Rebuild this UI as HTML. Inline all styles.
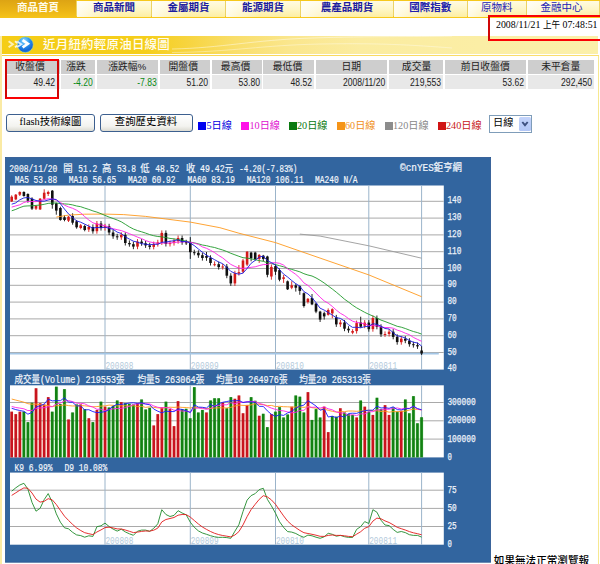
<!DOCTYPE html>
<html lang="zh-Hant">
<head>
<meta charset="utf-8">
<title>近月紐約輕原油日線圖</title>
<style>
html,body{margin:0;padding:0;background:#fff;}
body{width:600px;height:564px;position:relative;overflow:hidden;font-family:"Liberation Sans","Noto Sans CJK TC",sans-serif;}
.abs{position:absolute;}
#nav{position:absolute;left:0;top:0;width:600px;height:18px;background:linear-gradient(#f6c81c 0,#f6c81c 1px,#ecd366 1px,#ecd366 16.5px,#f8c91c 16.5px);}
.tab{position:absolute;top:1px;height:15.5px;background:linear-gradient(90deg,rgba(255,255,255,0.75),rgba(255,255,255,0) 45%),linear-gradient(#fffbe2,#fef6c4 55%,#fdeea2);color:#1c1ca0;font-weight:bold;font-size:10.5px;line-height:13.5px;text-align:center;white-space:nowrap;}
.tab.on{background:linear-gradient(#dda414,#e9b216 50%,#f6c41a);color:#fffbe8;top:0;height:18px;line-height:15.5px;}
#side-l{position:absolute;left:0;top:36px;width:1.8px;height:528px;background:#faeaa4;}
#side-r{position:absolute;left:597.5px;top:55px;width:1.3px;height:509px;background:#f6e890;}
#title{position:absolute;left:1.8px;top:36px;width:596.4px;height:17.8px;background:linear-gradient(90deg,#f5cd16 0,#f5ce1a 24%,#f7d43e 31%,#f9de6a 39%,#fae68c 48%,#fbecA0 60%,#fbf0aa 100%);}
#tline{position:absolute;left:1.8px;top:54.8px;width:596.8px;height:1.2px;background:linear-gradient(90deg,#f7d140,#f9d95c 50%,#fadf70);}
#title span{position:absolute;left:41.2px;top:0.8px;line-height:17.8px;color:#fffdf0;font-size:12.5px;font-weight:500;white-space:nowrap;letter-spacing:0.2px;}
.th,.td{position:absolute;white-space:nowrap;font-size:9.8px;color:#222;box-sizing:border-box;}
.th{top:60px;height:13.8px;line-height:13.8px;background:#cecece;text-align:center;}
.td{top:75.2px;height:14px;line-height:15.4px;overflow:hidden;background:#e8e8e8;text-align:right;}
.td span{display:inline-block;margin-right:1.5px;font-size:10px;transform:scaleX(0.86);transform-origin:100% 50%;}
.g{color:#0a8a16;}
.redbox{position:absolute;z-index:5;border:2.5px solid #fa0204;border-left:2.8px solid #d00606;border-right:2.8px solid #d00606;box-sizing:border-box;}
.btn{position:absolute;top:114px;height:18px;box-sizing:border-box;border:1px solid #3c5f8f;border-radius:3px;background:linear-gradient(#ffffff,#f3f3ef 70%,#dcdbd2);font-family:"Liberation Serif","Noto Sans CJK TC",serif;font-size:10.4px;line-height:14.4px;text-align:center;color:#000;white-space:nowrap;font-weight:400;}
.lg{position:absolute;top:120px;font-size:10.2px;line-height:12px;white-space:nowrap;font-family:"Liberation Serif","Noto Sans CJK TC",serif;}
.lg i{position:absolute;left:0;top:2.2px;width:8px;height:8px;}
.lg span{position:absolute;left:8.5px;top:0;}
#sel{position:absolute;left:489px;top:115px;width:43px;height:18px;box-sizing:border-box;border:1px solid #7f9db9;background:#fff;}
#sel span{position:absolute;left:3px;top:-1px;font-size:10.2px;line-height:15px;color:#000;}
#sel b{position:absolute;left:28.5px;top:1px;width:12px;height:14px;border-radius:1.5px;background:linear-gradient(#c4d4fb,#b2c6f6);box-sizing:border-box;}
#date{position:absolute;left:496px;top:18.2px;font-family:"Liberation Serif","Noto Sans CJK TC",serif;font-size:11px;line-height:13px;color:#000;white-space:nowrap;transform-origin:0 0;transform:scaleX(0.894);}
#foot{position:absolute;left:493.8px;top:555.2px;font-family:"Liberation Serif","Noto Sans CJK TC",serif;font-size:10.6px;line-height:12px;color:#000;white-space:nowrap;font-weight:500;}
svg text{font-family:"Liberation Mono","Noto Sans CJK TC",monospace;}
.ax{font-size:10.6px;fill:#eef3fb;stroke:#eef3fb;stroke-width:0.25px;}
.tt{font-size:10.6px;fill:#f4f7fc;white-space:pre;stroke:#f4f7fc;stroke-width:0.2px;}
.ml{font-size:10.6px;fill:#b4cadb;}
</style>
</head>
<body>
<div id="nav">
  <div class="tab on" style="left:0;width:76px;">商品首頁</div>
  <div class="tab" style="left:77px;width:74px;">商品新聞</div>
  <div class="tab" style="left:152px;width:73px;">金屬期貨</div>
  <div class="tab" style="left:226px;width:74px;">能源期貨</div>
  <div class="tab" style="left:301px;width:92px;">農產品期貨</div>
  <div class="tab" style="left:394px;width:72.5px;color:#2020ac;">國際指數</div>
  <div class="tab" style="left:467.5px;width:58.5px;font-weight:400;color:#2222b4;">原物料</div>
  <div class="tab" style="left:526.5px;width:72px;box-sizing:border-box;padding-right:2px;font-weight:400;color:#2222b4;">金融中心</div>
</div>
<div id="date">2008/11/21 <span style="font-size:9.6px">上午</span> 07:48:51</div>
<div class="redbox" style="left:488px;top:15px;width:116px;height:26px;"></div>

<div id="side-l"></div><div id="side-r"></div><div id="tline"></div>
<div id="title">
  <svg class="abs" style="left:0;top:0" width="44" height="19" viewBox="0 0 44 19">
    <defs><radialGradient id="bg" cx="0.42" cy="0.25" r="0.85"><stop offset="0" stop-color="#8fdcff"/><stop offset="0.4" stop-color="#2a96ee"/><stop offset="0.75" stop-color="#1464d4"/><stop offset="1" stop-color="#2a9cec"/></radialGradient></defs>
    <path d="M6.6 5.2 L10.8 8.2 L6.6 11.2" stroke="#fdf0b4" stroke-width="2" fill="none"/>
    <path d="M13 5.2 L17.2 8.2 L13 11.2" stroke="#fdf6d8" stroke-width="2" fill="none"/>
    <circle cx="23.3" cy="8.7" r="8" fill="url(#bg)" stroke="#cfe070" stroke-width="0.7"/>
    <path d="M15.2 5.4 L19.4 8.2 L15.2 11" stroke="#eaf4ff" stroke-width="1.8" fill="none" opacity="0.9"/>
    <path d="M20.6 4.2 L25.8 7.8 L20.6 11.4" stroke="#fff" stroke-width="2.7" fill="none"/>
  </svg>
  <svg class="abs" style="left:150px;top:0" width="300" height="18" viewBox="0 0 300 18"><path d="M20 13 C70 12 100 4 160 2 S260 1 300 0" stroke="#fff" stroke-opacity="0.55" stroke-width="0.8" fill="none"/><path d="M20 16.5 C80 16 110 9 170 8 S260 9 300 12" stroke="#fff" stroke-opacity="0.45" stroke-width="0.8" fill="none"/></svg>
  <span>近月紐約輕原油日線圖</span>
</div>

<!-- table -->
<div class="th" style="left:5px;width:54.5px;padding-right:4.5px;">收盤價</div>
<div class="th" style="left:61px;width:34px;padding-right:4px;">漲跌</div>
<div class="th" style="left:96.5px;width:61.5px;">漲跌幅%</div>
<div class="th" style="left:159.5px;width:50.5px;padding-right:3px;">開盤價</div>
<div class="th" style="left:211.5px;width:50.5px;padding-right:2.4px;">最高價</div>
<div class="th" style="left:263px;width:51px;padding-right:2px;">最低價</div>
<div class="th" style="left:315.5px;width:71.5px;">日期</div>
<div class="th" style="left:388.5px;width:54.5px;padding-left:1.6px;">成交量</div>
<div class="th" style="left:444.5px;width:81.5px;">前日收盤價</div>
<div class="th" style="left:527.5px;width:66.5px;">未平倉量</div>

<div class="td" style="left:5px;width:54.5px;"><span style="margin-right:4.7px">49.42</span></div>
<div class="td g" style="left:61px;width:34px;"><span style="margin-right:2.5px">-4.20</span></div>
<div class="td g" style="left:96.5px;width:61.5px;"><span>-7.83</span></div>
<div class="td" style="left:159.5px;width:50.5px;"><span>51.20</span></div>
<div class="td" style="left:211.5px;width:50.5px;"><span>53.80</span></div>
<div class="td" style="left:263px;width:51px;"><span>48.52</span></div>
<div class="td" style="left:315.5px;width:71.5px;"><span>2008/11/20</span></div>
<div class="td" style="left:388.5px;width:54.5px;"><span>219,553</span></div>
<div class="td" style="left:444.5px;width:81.5px;"><span>53.62</span></div>
<div class="td" style="left:527.5px;width:66.5px;"><span>292,450</span></div>
<div class="redbox" style="left:5px;top:59px;width:54.3px;height:39.8px;"></div>

<!-- buttons / legend -->
<div class="btn" style="left:6px;width:89px;">flash技術線圖</div>
<div class="btn" style="left:99.5px;width:93px;">查詢歷史資料</div>
<div class="lg" style="left:198px;color:#0000e0;"><i style="background:#0000f0"></i><span>5日線</span></div>
<div class="lg" style="left:241px;color:#e010d0;"><i style="background:#ff10e8"></i><span>10日線</span></div>
<div class="lg" style="left:288.5px;color:#0a7a10;"><i style="background:#0a7a10"></i><span>20日線</span></div>
<div class="lg" style="left:336.5px;color:#f09020;"><i style="background:#f59418"></i><span>60日線</span></div>
<div class="lg" style="left:384.5px;color:#888;"><i style="background:#8c8c8c"></i><span>120日線</span></div>
<div class="lg" style="left:437.5px;color:#c81818;"><i style="background:#d01414"></i><span>240日線</span></div>
<div id="sel"><span>日線</span><b><svg width="12" height="14" viewBox="0 0 12 14" style="position:absolute;left:0;top:0"><path d="M3.3 5 L6 8.2 L8.7 5" stroke="#3d5080" stroke-width="1.9" fill="none"/></svg></b></div>

<svg class="abs" style="left:0;top:0" width="600" height="564" viewBox="0 0 600 564">
<rect x="5.4" y="157.4" width="485.2" height="404.8" fill="#32659f" stroke="#285690" stroke-width="0.8"/>
<rect x="10" y="185.5" width="433.8" height="184.10000000000002" fill="#fff"/>
<rect x="10" y="385.3" width="433.8" height="72.09999999999997" fill="#fff"/>
<rect x="10" y="472.6" width="433.8" height="72.10000000000002" fill="#fff"/>
<line x1="10" x2="443.8" y1="352.5" y2="352.5" stroke="#a9a9a9" stroke-width="1"/>
<line x1="10" x2="443.8" y1="335.7" y2="335.7" stroke="#a9a9a9" stroke-width="1"/>
<line x1="10" x2="443.8" y1="318.9" y2="318.9" stroke="#a9a9a9" stroke-width="1"/>
<line x1="10" x2="443.8" y1="302.1" y2="302.1" stroke="#a9a9a9" stroke-width="1"/>
<line x1="10" x2="443.8" y1="285.3" y2="285.3" stroke="#a9a9a9" stroke-width="1"/>
<line x1="10" x2="443.8" y1="268.5" y2="268.5" stroke="#a9a9a9" stroke-width="1"/>
<line x1="10" x2="443.8" y1="251.7" y2="251.7" stroke="#a9a9a9" stroke-width="1"/>
<line x1="10" x2="443.8" y1="234.9" y2="234.9" stroke="#a9a9a9" stroke-width="1"/>
<line x1="10" x2="443.8" y1="218.1" y2="218.1" stroke="#a9a9a9" stroke-width="1"/>
<line x1="10" x2="443.8" y1="201.3" y2="201.3" stroke="#a9a9a9" stroke-width="1"/>
<line x1="10" x2="443.8" y1="439.1" y2="439.1" stroke="#a9a9a9" stroke-width="1"/>
<line x1="10" x2="443.8" y1="420.8" y2="420.8" stroke="#a9a9a9" stroke-width="1"/>
<line x1="10" x2="443.8" y1="402.5" y2="402.5" stroke="#a9a9a9" stroke-width="1"/>
<line x1="10" x2="443.8" y1="526.5" y2="526.5" stroke="#a9a9a9" stroke-width="1"/>
<line x1="10" x2="443.8" y1="508.4" y2="508.4" stroke="#a9a9a9" stroke-width="1"/>
<line x1="10" x2="443.8" y1="490.2" y2="490.2" stroke="#a9a9a9" stroke-width="1"/>
<line x1="105.0" x2="105.0" y1="185.5" y2="369.6" stroke="#9bb4ca" stroke-width="1"/>
<line x1="105.0" x2="105.0" y1="385.3" y2="457.4" stroke="#9bb4ca" stroke-width="1"/>
<line x1="105.0" x2="105.0" y1="472.6" y2="544.7" stroke="#9bb4ca" stroke-width="1"/>
<line x1="190.3" x2="190.3" y1="185.5" y2="369.6" stroke="#9bb4ca" stroke-width="1"/>
<line x1="190.3" x2="190.3" y1="385.3" y2="457.4" stroke="#9bb4ca" stroke-width="1"/>
<line x1="190.3" x2="190.3" y1="472.6" y2="544.7" stroke="#9bb4ca" stroke-width="1"/>
<line x1="275.5" x2="275.5" y1="185.5" y2="369.6" stroke="#9bb4ca" stroke-width="1"/>
<line x1="275.5" x2="275.5" y1="385.3" y2="457.4" stroke="#9bb4ca" stroke-width="1"/>
<line x1="275.5" x2="275.5" y1="472.6" y2="544.7" stroke="#9bb4ca" stroke-width="1"/>
<line x1="368.8" x2="368.8" y1="185.5" y2="369.6" stroke="#9bb4ca" stroke-width="1"/>
<line x1="368.8" x2="368.8" y1="385.3" y2="457.4" stroke="#9bb4ca" stroke-width="1"/>
<line x1="368.8" x2="368.8" y1="472.6" y2="544.7" stroke="#9bb4ca" stroke-width="1"/>
<line x1="421.6" x2="421.6" y1="185.5" y2="369.6" stroke="#9bb4ca" stroke-width="1"/>
<line x1="421.6" x2="421.6" y1="385.3" y2="457.4" stroke="#9bb4ca" stroke-width="1"/>
<line x1="421.6" x2="421.6" y1="472.6" y2="544.7" stroke="#9bb4ca" stroke-width="1"/>
<line x1="10" x2="438.8" y1="353.6" y2="353.6" stroke="#a3c6e6" stroke-width="1.7"/>
<text x="105.4" y="369.0" class="ml" textLength="28" lengthAdjust="spacingAndGlyphs">200808</text>
<text x="105.4" y="544.1" class="ml" textLength="28" lengthAdjust="spacingAndGlyphs">200808</text>
<text x="190.7" y="369.0" class="ml" textLength="28" lengthAdjust="spacingAndGlyphs">200809</text>
<text x="190.7" y="544.1" class="ml" textLength="28" lengthAdjust="spacingAndGlyphs">200809</text>
<text x="275.9" y="369.0" class="ml" textLength="28" lengthAdjust="spacingAndGlyphs">200810</text>
<text x="275.9" y="544.1" class="ml" textLength="28" lengthAdjust="spacingAndGlyphs">200810</text>
<text x="369.2" y="369.0" class="ml" textLength="28" lengthAdjust="spacingAndGlyphs">200811</text>
<text x="369.2" y="544.1" class="ml" textLength="28" lengthAdjust="spacingAndGlyphs">200811</text>
<rect x="9.7" y="412.1" width="4.06" height="45.3" fill="#ff9a50" fill-opacity="0.14"/>
<rect x="10.3" y="411.6" width="2.7" height="45.8" fill="#c8141e"/>
<rect x="13.7" y="414.6" width="4.06" height="42.8" fill="#ff9a50" fill-opacity="0.14"/>
<rect x="14.4" y="414.1" width="2.7" height="43.3" fill="#c8141e"/>
<rect x="17.8" y="412.1" width="4.06" height="45.3" fill="#ff9a50" fill-opacity="0.14"/>
<rect x="18.5" y="411.6" width="2.7" height="45.8" fill="#c8141e"/>
<rect x="21.8" y="412.1" width="4.06" height="45.3" fill="#48d048" fill-opacity="0.2"/>
<rect x="22.5" y="411.6" width="2.7" height="45.8" fill="#128212"/>
<rect x="25.9" y="422.6" width="4.06" height="34.8" fill="#48d048" fill-opacity="0.2"/>
<rect x="26.6" y="422.1" width="2.7" height="35.3" fill="#128212"/>
<rect x="30.0" y="403.2" width="4.06" height="54.2" fill="#48d048" fill-opacity="0.2"/>
<rect x="30.6" y="402.7" width="2.7" height="54.7" fill="#128212"/>
<rect x="34.0" y="388.7" width="4.06" height="68.7" fill="#ff9a50" fill-opacity="0.14"/>
<rect x="34.7" y="388.2" width="2.7" height="69.2" fill="#c8141e"/>
<rect x="38.1" y="403.7" width="4.06" height="53.7" fill="#ff9a50" fill-opacity="0.14"/>
<rect x="38.8" y="403.2" width="2.7" height="54.2" fill="#c8141e"/>
<rect x="42.1" y="404.9" width="4.06" height="52.5" fill="#ff9a50" fill-opacity="0.14"/>
<rect x="42.8" y="404.4" width="2.7" height="53.0" fill="#c8141e"/>
<rect x="46.2" y="397.6" width="4.06" height="59.8" fill="#ff9a50" fill-opacity="0.14"/>
<rect x="46.9" y="397.1" width="2.7" height="60.3" fill="#c8141e"/>
<rect x="50.3" y="412.1" width="4.06" height="45.3" fill="#48d048" fill-opacity="0.2"/>
<rect x="50.9" y="411.6" width="2.7" height="45.8" fill="#128212"/>
<rect x="54.3" y="387.1" width="4.06" height="70.3" fill="#48d048" fill-opacity="0.2"/>
<rect x="55.0" y="386.6" width="2.7" height="70.8" fill="#128212"/>
<rect x="58.4" y="404.6" width="4.06" height="52.8" fill="#48d048" fill-opacity="0.2"/>
<rect x="59.0" y="404.1" width="2.7" height="53.3" fill="#128212"/>
<rect x="62.4" y="389.6" width="4.06" height="67.8" fill="#48d048" fill-opacity="0.2"/>
<rect x="63.1" y="389.1" width="2.7" height="68.3" fill="#128212"/>
<rect x="66.5" y="419.9" width="4.06" height="37.5" fill="#ff9a50" fill-opacity="0.14"/>
<rect x="67.2" y="419.4" width="2.7" height="38.0" fill="#c8141e"/>
<rect x="70.5" y="412.9" width="4.06" height="44.5" fill="#48d048" fill-opacity="0.2"/>
<rect x="71.2" y="412.4" width="2.7" height="45.0" fill="#128212"/>
<rect x="74.6" y="404.9" width="4.06" height="52.5" fill="#48d048" fill-opacity="0.2"/>
<rect x="75.3" y="404.4" width="2.7" height="53.0" fill="#128212"/>
<rect x="78.7" y="404.9" width="4.06" height="52.5" fill="#ff9a50" fill-opacity="0.14"/>
<rect x="79.3" y="404.4" width="2.7" height="53.0" fill="#c8141e"/>
<rect x="82.7" y="409.6" width="4.06" height="47.8" fill="#48d048" fill-opacity="0.2"/>
<rect x="83.4" y="409.1" width="2.7" height="48.3" fill="#128212"/>
<rect x="86.8" y="418.7" width="4.06" height="38.7" fill="#ff9a50" fill-opacity="0.14"/>
<rect x="87.5" y="418.2" width="2.7" height="39.2" fill="#c8141e"/>
<rect x="90.8" y="422.6" width="4.06" height="34.8" fill="#48d048" fill-opacity="0.2"/>
<rect x="91.5" y="422.1" width="2.7" height="35.3" fill="#128212"/>
<rect x="94.9" y="410.4" width="4.06" height="47.0" fill="#ff9a50" fill-opacity="0.14"/>
<rect x="95.6" y="409.9" width="2.7" height="47.5" fill="#c8141e"/>
<rect x="98.9" y="402.1" width="4.06" height="55.3" fill="#48d048" fill-opacity="0.2"/>
<rect x="99.6" y="401.6" width="2.7" height="55.8" fill="#128212"/>
<rect x="103.0" y="407.1" width="4.06" height="50.3" fill="#ff9a50" fill-opacity="0.14"/>
<rect x="103.7" y="406.6" width="2.7" height="50.8" fill="#c8141e"/>
<rect x="107.1" y="407.9" width="4.06" height="49.5" fill="#48d048" fill-opacity="0.2"/>
<rect x="107.7" y="407.4" width="2.7" height="50.0" fill="#128212"/>
<rect x="111.1" y="406.2" width="4.06" height="51.2" fill="#48d048" fill-opacity="0.2"/>
<rect x="111.8" y="405.7" width="2.7" height="51.7" fill="#128212"/>
<rect x="115.2" y="400.9" width="4.06" height="56.5" fill="#48d048" fill-opacity="0.2"/>
<rect x="115.9" y="400.4" width="2.7" height="57.0" fill="#128212"/>
<rect x="119.2" y="402.6" width="4.06" height="54.8" fill="#ff9a50" fill-opacity="0.14"/>
<rect x="119.9" y="402.1" width="2.7" height="55.3" fill="#c8141e"/>
<rect x="123.3" y="403.7" width="4.06" height="53.7" fill="#48d048" fill-opacity="0.2"/>
<rect x="124.0" y="403.2" width="2.7" height="54.2" fill="#128212"/>
<rect x="127.4" y="404.2" width="4.06" height="53.2" fill="#48d048" fill-opacity="0.2"/>
<rect x="128.0" y="403.7" width="2.7" height="53.7" fill="#128212"/>
<rect x="131.4" y="404.9" width="4.06" height="52.5" fill="#48d048" fill-opacity="0.2"/>
<rect x="132.1" y="404.4" width="2.7" height="53.0" fill="#128212"/>
<rect x="135.5" y="403.7" width="4.06" height="53.7" fill="#ff9a50" fill-opacity="0.14"/>
<rect x="136.1" y="403.2" width="2.7" height="54.2" fill="#c8141e"/>
<rect x="139.5" y="399.9" width="4.06" height="57.5" fill="#48d048" fill-opacity="0.2"/>
<rect x="140.2" y="399.4" width="2.7" height="58.0" fill="#128212"/>
<rect x="143.6" y="409.9" width="4.06" height="47.5" fill="#48d048" fill-opacity="0.2"/>
<rect x="144.3" y="409.4" width="2.7" height="48.0" fill="#128212"/>
<rect x="147.6" y="408.2" width="4.06" height="49.2" fill="#48d048" fill-opacity="0.2"/>
<rect x="148.3" y="407.7" width="2.7" height="49.7" fill="#128212"/>
<rect x="151.7" y="425.9" width="4.06" height="31.5" fill="#ff9a50" fill-opacity="0.14"/>
<rect x="152.4" y="425.4" width="2.7" height="32.0" fill="#c8141e"/>
<rect x="155.8" y="414.6" width="4.06" height="42.8" fill="#ff9a50" fill-opacity="0.14"/>
<rect x="156.4" y="414.1" width="2.7" height="43.3" fill="#c8141e"/>
<rect x="159.8" y="407.9" width="4.06" height="49.5" fill="#ff9a50" fill-opacity="0.14"/>
<rect x="160.5" y="407.4" width="2.7" height="50.0" fill="#c8141e"/>
<rect x="163.9" y="402.1" width="4.06" height="55.3" fill="#48d048" fill-opacity="0.2"/>
<rect x="164.6" y="401.6" width="2.7" height="55.8" fill="#128212"/>
<rect x="167.9" y="409.6" width="4.06" height="47.8" fill="#ff9a50" fill-opacity="0.14"/>
<rect x="168.6" y="409.1" width="2.7" height="48.3" fill="#c8141e"/>
<rect x="172.0" y="426.6" width="4.06" height="30.8" fill="#ff9a50" fill-opacity="0.14"/>
<rect x="172.7" y="426.1" width="2.7" height="31.3" fill="#c8141e"/>
<rect x="176.0" y="401.6" width="4.06" height="55.8" fill="#ff9a50" fill-opacity="0.14"/>
<rect x="176.7" y="401.1" width="2.7" height="56.3" fill="#c8141e"/>
<rect x="180.1" y="409.6" width="4.06" height="47.8" fill="#48d048" fill-opacity="0.2"/>
<rect x="180.8" y="409.1" width="2.7" height="48.3" fill="#128212"/>
<rect x="184.2" y="409.2" width="4.06" height="48.2" fill="#48d048" fill-opacity="0.2"/>
<rect x="184.8" y="408.7" width="2.7" height="48.7" fill="#128212"/>
<rect x="188.2" y="418.7" width="4.06" height="38.7" fill="#48d048" fill-opacity="0.2"/>
<rect x="188.9" y="418.2" width="2.7" height="39.2" fill="#128212"/>
<rect x="192.3" y="387.6" width="4.06" height="69.8" fill="#48d048" fill-opacity="0.2"/>
<rect x="193.0" y="387.1" width="2.7" height="70.3" fill="#128212"/>
<rect x="196.3" y="412.9" width="4.06" height="44.5" fill="#48d048" fill-opacity="0.2"/>
<rect x="197.0" y="412.4" width="2.7" height="45.0" fill="#128212"/>
<rect x="200.4" y="410.4" width="4.06" height="47.0" fill="#48d048" fill-opacity="0.2"/>
<rect x="201.1" y="409.9" width="2.7" height="47.5" fill="#128212"/>
<rect x="204.5" y="412.9" width="4.06" height="44.5" fill="#ff9a50" fill-opacity="0.14"/>
<rect x="205.1" y="412.4" width="2.7" height="45.0" fill="#c8141e"/>
<rect x="208.5" y="400.9" width="4.06" height="56.5" fill="#48d048" fill-opacity="0.2"/>
<rect x="209.2" y="400.4" width="2.7" height="57.0" fill="#128212"/>
<rect x="212.6" y="398.7" width="4.06" height="58.7" fill="#48d048" fill-opacity="0.2"/>
<rect x="213.2" y="398.2" width="2.7" height="59.2" fill="#128212"/>
<rect x="216.6" y="398.7" width="4.06" height="58.7" fill="#48d048" fill-opacity="0.2"/>
<rect x="217.3" y="398.2" width="2.7" height="59.2" fill="#128212"/>
<rect x="220.7" y="402.9" width="4.06" height="54.5" fill="#ff9a50" fill-opacity="0.14"/>
<rect x="221.4" y="402.4" width="2.7" height="55.0" fill="#c8141e"/>
<rect x="224.7" y="408.7" width="4.06" height="48.7" fill="#48d048" fill-opacity="0.2"/>
<rect x="225.4" y="408.2" width="2.7" height="49.2" fill="#128212"/>
<rect x="228.8" y="397.6" width="4.06" height="59.8" fill="#48d048" fill-opacity="0.2"/>
<rect x="229.5" y="397.1" width="2.7" height="60.3" fill="#128212"/>
<rect x="232.9" y="399.2" width="4.06" height="58.2" fill="#ff9a50" fill-opacity="0.14"/>
<rect x="233.5" y="398.7" width="2.7" height="58.7" fill="#c8141e"/>
<rect x="236.9" y="395.9" width="4.06" height="61.5" fill="#ff9a50" fill-opacity="0.14"/>
<rect x="237.6" y="395.4" width="2.7" height="62.0" fill="#c8141e"/>
<rect x="241.0" y="413.7" width="4.06" height="43.7" fill="#ff9a50" fill-opacity="0.14"/>
<rect x="241.7" y="413.2" width="2.7" height="44.2" fill="#c8141e"/>
<rect x="245.0" y="405.4" width="4.06" height="52.0" fill="#ff9a50" fill-opacity="0.14"/>
<rect x="245.7" y="404.9" width="2.7" height="52.5" fill="#c8141e"/>
<rect x="249.1" y="397.6" width="4.06" height="59.8" fill="#48d048" fill-opacity="0.2"/>
<rect x="249.8" y="397.1" width="2.7" height="60.3" fill="#128212"/>
<rect x="253.2" y="401.2" width="4.06" height="56.2" fill="#48d048" fill-opacity="0.2"/>
<rect x="253.8" y="400.7" width="2.7" height="56.7" fill="#128212"/>
<rect x="257.2" y="416.2" width="4.06" height="41.2" fill="#ff9a50" fill-opacity="0.14"/>
<rect x="257.9" y="415.7" width="2.7" height="41.7" fill="#c8141e"/>
<rect x="261.3" y="414.2" width="4.06" height="43.2" fill="#48d048" fill-opacity="0.2"/>
<rect x="261.9" y="413.7" width="2.7" height="43.7" fill="#128212"/>
<rect x="265.3" y="427.6" width="4.06" height="29.8" fill="#48d048" fill-opacity="0.2"/>
<rect x="266.0" y="427.1" width="2.7" height="30.3" fill="#128212"/>
<rect x="269.4" y="414.6" width="4.06" height="42.8" fill="#ff9a50" fill-opacity="0.14"/>
<rect x="270.1" y="414.1" width="2.7" height="43.3" fill="#c8141e"/>
<rect x="273.4" y="412.1" width="4.06" height="45.3" fill="#48d048" fill-opacity="0.2"/>
<rect x="274.1" y="411.6" width="2.7" height="45.8" fill="#128212"/>
<rect x="277.5" y="407.6" width="4.06" height="49.8" fill="#48d048" fill-opacity="0.2"/>
<rect x="278.2" y="407.1" width="2.7" height="50.3" fill="#128212"/>
<rect x="281.6" y="417.9" width="4.06" height="39.5" fill="#48d048" fill-opacity="0.2"/>
<rect x="282.2" y="417.4" width="2.7" height="40.0" fill="#128212"/>
<rect x="285.6" y="414.9" width="4.06" height="42.5" fill="#48d048" fill-opacity="0.2"/>
<rect x="286.3" y="414.4" width="2.7" height="43.0" fill="#128212"/>
<rect x="289.7" y="407.1" width="4.06" height="50.3" fill="#ff9a50" fill-opacity="0.14"/>
<rect x="290.4" y="406.6" width="2.7" height="50.8" fill="#c8141e"/>
<rect x="293.7" y="395.9" width="4.06" height="61.5" fill="#48d048" fill-opacity="0.2"/>
<rect x="294.4" y="395.4" width="2.7" height="62.0" fill="#128212"/>
<rect x="297.8" y="397.1" width="4.06" height="60.3" fill="#48d048" fill-opacity="0.2"/>
<rect x="298.5" y="396.6" width="2.7" height="60.8" fill="#128212"/>
<rect x="301.8" y="412.9" width="4.06" height="44.5" fill="#48d048" fill-opacity="0.2"/>
<rect x="302.5" y="412.4" width="2.7" height="45.0" fill="#128212"/>
<rect x="305.9" y="392.6" width="4.06" height="64.8" fill="#ff9a50" fill-opacity="0.14"/>
<rect x="306.6" y="392.1" width="2.7" height="65.3" fill="#c8141e"/>
<rect x="310.0" y="420.4" width="4.06" height="37.0" fill="#48d048" fill-opacity="0.2"/>
<rect x="310.6" y="419.9" width="2.7" height="37.5" fill="#128212"/>
<rect x="314.0" y="409.6" width="4.06" height="47.8" fill="#48d048" fill-opacity="0.2"/>
<rect x="314.7" y="409.1" width="2.7" height="48.3" fill="#128212"/>
<rect x="318.1" y="417.9" width="4.06" height="39.5" fill="#48d048" fill-opacity="0.2"/>
<rect x="318.8" y="417.4" width="2.7" height="40.0" fill="#128212"/>
<rect x="322.1" y="407.1" width="4.06" height="50.3" fill="#ff9a50" fill-opacity="0.14"/>
<rect x="322.8" y="406.6" width="2.7" height="50.8" fill="#c8141e"/>
<rect x="326.2" y="432.6" width="4.06" height="24.8" fill="#ff9a50" fill-opacity="0.14"/>
<rect x="326.9" y="432.1" width="2.7" height="25.3" fill="#c8141e"/>
<rect x="330.3" y="416.6" width="4.06" height="40.8" fill="#48d048" fill-opacity="0.2"/>
<rect x="330.9" y="416.1" width="2.7" height="41.3" fill="#128212"/>
<rect x="334.3" y="417.1" width="4.06" height="40.3" fill="#48d048" fill-opacity="0.2"/>
<rect x="335.0" y="416.6" width="2.7" height="40.8" fill="#128212"/>
<rect x="338.4" y="408.7" width="4.06" height="48.7" fill="#ff9a50" fill-opacity="0.14"/>
<rect x="339.0" y="408.2" width="2.7" height="49.2" fill="#c8141e"/>
<rect x="342.4" y="412.9" width="4.06" height="44.5" fill="#48d048" fill-opacity="0.2"/>
<rect x="343.1" y="412.4" width="2.7" height="45.0" fill="#128212"/>
<rect x="346.5" y="414.6" width="4.06" height="42.8" fill="#48d048" fill-opacity="0.2"/>
<rect x="347.2" y="414.1" width="2.7" height="43.3" fill="#128212"/>
<rect x="350.5" y="415.4" width="4.06" height="42.0" fill="#48d048" fill-opacity="0.2"/>
<rect x="351.2" y="414.9" width="2.7" height="42.5" fill="#128212"/>
<rect x="354.6" y="417.9" width="4.06" height="39.5" fill="#ff9a50" fill-opacity="0.14"/>
<rect x="355.3" y="417.4" width="2.7" height="40.0" fill="#c8141e"/>
<rect x="358.7" y="400.9" width="4.06" height="56.5" fill="#48d048" fill-opacity="0.2"/>
<rect x="359.3" y="400.4" width="2.7" height="57.0" fill="#128212"/>
<rect x="362.7" y="407.1" width="4.06" height="50.3" fill="#ff9a50" fill-opacity="0.14"/>
<rect x="363.4" y="406.6" width="2.7" height="50.8" fill="#c8141e"/>
<rect x="366.8" y="412.1" width="4.06" height="45.3" fill="#48d048" fill-opacity="0.2"/>
<rect x="367.5" y="411.6" width="2.7" height="45.8" fill="#128212"/>
<rect x="370.8" y="415.4" width="4.06" height="42.0" fill="#ff9a50" fill-opacity="0.14"/>
<rect x="371.5" y="414.9" width="2.7" height="42.5" fill="#c8141e"/>
<rect x="374.9" y="398.2" width="4.06" height="59.2" fill="#48d048" fill-opacity="0.2"/>
<rect x="375.6" y="397.7" width="2.7" height="59.7" fill="#128212"/>
<rect x="378.9" y="409.6" width="4.06" height="47.8" fill="#48d048" fill-opacity="0.2"/>
<rect x="379.6" y="409.1" width="2.7" height="48.3" fill="#128212"/>
<rect x="383.0" y="405.6" width="4.06" height="51.8" fill="#ff9a50" fill-opacity="0.14"/>
<rect x="383.7" y="405.1" width="2.7" height="52.3" fill="#c8141e"/>
<rect x="387.1" y="415.4" width="4.06" height="42.0" fill="#ff9a50" fill-opacity="0.14"/>
<rect x="387.7" y="414.9" width="2.7" height="42.5" fill="#c8141e"/>
<rect x="391.1" y="407.9" width="4.06" height="49.5" fill="#48d048" fill-opacity="0.2"/>
<rect x="391.8" y="407.4" width="2.7" height="50.0" fill="#128212"/>
<rect x="395.2" y="412.1" width="4.06" height="45.3" fill="#48d048" fill-opacity="0.2"/>
<rect x="395.9" y="411.6" width="2.7" height="45.8" fill="#128212"/>
<rect x="399.2" y="411.2" width="4.06" height="46.2" fill="#ff9a50" fill-opacity="0.14"/>
<rect x="399.9" y="410.7" width="2.7" height="46.7" fill="#c8141e"/>
<rect x="403.3" y="399.9" width="4.06" height="57.5" fill="#48d048" fill-opacity="0.2"/>
<rect x="404.0" y="399.4" width="2.7" height="58.0" fill="#128212"/>
<rect x="407.4" y="413.7" width="4.06" height="43.7" fill="#48d048" fill-opacity="0.2"/>
<rect x="408.0" y="413.2" width="2.7" height="44.2" fill="#128212"/>
<rect x="411.4" y="396.6" width="4.06" height="60.8" fill="#48d048" fill-opacity="0.2"/>
<rect x="412.1" y="396.1" width="2.7" height="61.3" fill="#128212"/>
<rect x="415.5" y="423.7" width="4.06" height="33.7" fill="#48d048" fill-opacity="0.2"/>
<rect x="416.1" y="423.2" width="2.7" height="34.2" fill="#128212"/>
<rect x="419.5" y="417.7" width="4.06" height="39.7" fill="#48d048" fill-opacity="0.2"/>
<rect x="420.2" y="417.2" width="2.7" height="40.2" fill="#128212"/>
<polyline points="11.7,399.0 15.8,400.1 19.8,401.1 23.9,402.2 27.9,403.7 32.0,404.2 36.0,404.1 40.1,404.7 44.2,405.3 48.2,405.6 52.3,406.6 56.3,405.7 60.4,405.6 64.5,404.9 68.5,405.6 72.6,406.0 76.6,405.8 80.7,405.7 84.7,405.8 88.8,406.3 92.9,406.8 96.9,406.6 101.0,406.1 105.0,405.9 109.1,405.1 113.1,405.3 117.2,405.9 121.3,405.8 125.3,405.8 129.4,406.1 133.4,405.7 137.5,406.6 141.6,406.3 145.6,407.4 149.7,406.8 153.7,407.4 157.8,407.9 161.8,408.1 165.9,407.7 170.0,407.2 174.0,407.4 178.1,407.0 182.1,407.4 186.2,407.5 190.3,408.0 194.3,407.1 198.4,407.7 202.4,408.1 206.5,408.5 210.5,408.4 214.6,408.0 218.7,407.8 222.7,407.9 226.8,407.9 230.8,407.4 234.9,406.0 238.9,405.1 243.0,405.4 247.1,405.5 251.1,404.9 255.2,403.7 259.2,404.4 263.3,404.6 267.4,405.6 271.4,405.4 275.5,406.6 279.5,406.3 283.6,406.7 287.6,406.8 291.7,407.1 295.8,407.0 299.8,406.9 303.9,407.4 307.9,406.6 312.0,407.7 316.0,408.2 320.1,409.3 324.2,409.0 328.2,410.3 332.3,411.3 336.3,412.1 340.4,411.7 344.5,411.6 348.5,411.0 352.6,411.0 356.6,411.3 360.7,411.0 364.7,410.5 368.8,410.3 372.9,410.7 376.9,410.8 381.0,411.5 385.0,411.1 389.1,412.2 393.2,411.6 397.2,411.7 401.3,411.4 405.3,411.1 409.4,410.1 413.4,409.1 417.5,409.4 421.6,409.9" fill="none" stroke="#ff9a1e" stroke-width="0.9" stroke-linejoin="round"/>
<polyline points="11.7,406.5 15.8,407.5 19.8,408.1 23.9,408.8 27.9,410.6 32.0,410.4 36.0,408.4 40.1,408.0 44.2,407.7 48.2,406.7 52.3,406.7 56.3,403.9 60.4,403.2 64.5,400.9 68.5,400.6 72.6,401.6 76.6,403.2 80.7,403.3 84.7,403.8 88.8,405.9 92.9,407.0 96.9,409.3 101.0,409.1 105.0,410.8 109.1,409.6 113.1,408.9 117.2,408.5 121.3,408.3 125.3,407.7 129.4,406.3 133.4,404.5 137.5,403.8 141.6,403.6 145.6,403.9 149.7,403.9 153.7,405.9 157.8,407.3 161.8,407.8 165.9,407.6 170.0,408.2 174.0,410.3 178.1,410.1 182.1,411.1 186.2,411.0 190.3,412.1 194.3,408.2 198.4,408.1 202.4,408.3 206.5,409.4 210.5,408.5 214.6,405.8 218.7,405.5 222.7,404.8 226.8,404.8 230.8,402.6 234.9,403.8 238.9,402.1 243.0,402.4 247.1,401.7 251.1,401.4 255.2,401.6 259.2,403.4 263.3,404.5 267.4,406.4 271.4,408.1 275.5,409.4 279.5,410.5 283.6,410.9 287.6,411.9 291.7,412.8 295.8,412.3 299.8,410.4 303.9,410.3 307.9,406.8 312.0,407.3 316.0,407.1 320.1,408.1 324.2,407.0 328.2,408.8 332.3,409.8 336.3,411.9 340.4,413.0 344.5,413.0 348.5,415.2 352.6,414.7 356.6,415.6 360.7,413.9 364.7,413.9 368.8,411.8 372.9,411.7 376.9,409.8 381.0,409.9 385.0,409.2 389.1,409.3 393.2,408.5 397.2,407.9 401.3,409.0 405.3,408.2 409.4,408.4 413.4,406.5 417.5,409.1 421.6,409.9" fill="none" stroke="#ff22e6" stroke-width="0.9" stroke-linejoin="round"/>
<polyline points="11.7,408.3 15.8,409.6 19.8,410.5 23.9,411.3 27.9,414.2 32.0,412.4 36.0,407.2 40.1,405.6 44.2,404.1 48.2,399.1 52.3,400.9 56.3,400.6 60.4,400.7 64.5,397.7 68.5,402.1 72.6,402.3 76.6,405.9 80.7,405.9 84.7,409.9 88.8,409.7 92.9,411.6 96.9,412.7 101.0,412.2 105.0,411.7 109.1,409.5 113.1,406.2 117.2,404.3 121.3,404.4 125.3,403.8 129.4,403.0 133.4,402.8 137.5,403.3 141.6,402.8 145.6,404.0 149.7,404.8 153.7,409.0 157.8,411.2 161.8,412.8 165.9,411.2 170.0,411.5 174.0,411.6 178.1,409.0 182.1,409.4 186.2,410.8 190.3,412.6 194.3,404.8 198.4,407.1 202.4,407.3 206.5,408.0 210.5,404.4 214.6,406.7 218.7,403.8 222.7,402.3 226.8,401.5 230.8,400.8 234.9,400.9 238.9,400.4 243.0,402.5 247.1,401.9 251.1,401.9 255.2,402.3 259.2,406.3 263.3,406.4 267.4,410.9 271.4,414.3 275.5,416.4 279.5,414.7 283.6,415.4 287.6,412.9 291.7,411.4 295.8,408.2 299.8,406.1 303.9,405.1 307.9,400.6 312.0,403.3 316.0,406.0 320.1,410.2 324.2,409.0 328.2,417.0 332.3,416.2 336.3,417.7 340.4,415.9 344.5,417.1 348.5,413.5 352.6,413.2 356.6,413.4 360.7,411.8 364.7,410.7 368.8,410.2 372.9,410.2 376.9,406.2 381.0,408.0 385.0,407.7 389.1,408.3 393.2,406.8 397.2,409.6 401.3,409.9 405.3,408.8 409.4,408.5 413.4,406.2 417.5,408.5 421.6,409.8" fill="none" stroke="#1a1aff" stroke-width="0.9" stroke-linejoin="round"/>
<line x1="11.7" x2="11.7" y1="195.3" y2="202.0" stroke="#d41a1a" stroke-width="0.9"/>
<rect x="10.4" y="196.7" width="2.6" height="4.7" fill="#d41a1a"/>
<line x1="15.8" x2="15.8" y1="194.0" y2="200.0" stroke="#d41a1a" stroke-width="0.9"/>
<rect x="14.5" y="194.7" width="2.6" height="4.7" fill="#d41a1a"/>
<line x1="19.8" x2="19.8" y1="191.3" y2="196.0" stroke="#d41a1a" stroke-width="0.9"/>
<rect x="18.5" y="192.0" width="2.6" height="2.7" fill="#d41a1a"/>
<line x1="23.9" x2="23.9" y1="191.3" y2="196.7" stroke="#101010" stroke-width="0.9"/>
<rect x="22.6" y="192.0" width="2.6" height="4.0" fill="#101010"/>
<line x1="27.9" x2="27.9" y1="193.3" y2="202.7" stroke="#101010" stroke-width="0.9"/>
<rect x="26.6" y="194.0" width="2.6" height="6.7" fill="#101010"/>
<line x1="32.0" x2="32.0" y1="197.3" y2="210.0" stroke="#101010" stroke-width="0.9"/>
<rect x="30.7" y="198.7" width="2.6" height="10.0" fill="#101010"/>
<line x1="36.0" x2="36.0" y1="205.3" y2="210.0" stroke="#d41a1a" stroke-width="0.9"/>
<rect x="34.7" y="206.0" width="2.6" height="2.7" fill="#d41a1a"/>
<line x1="40.1" x2="40.1" y1="198.0" y2="210.0" stroke="#d41a1a" stroke-width="0.9"/>
<rect x="38.8" y="198.7" width="2.6" height="10.7" fill="#d41a1a"/>
<line x1="44.2" x2="44.2" y1="189.3" y2="199.3" stroke="#d41a1a" stroke-width="0.9"/>
<rect x="42.9" y="192.7" width="2.6" height="6.0" fill="#d41a1a"/>
<line x1="48.2" x2="48.2" y1="190.7" y2="196.0" stroke="#d41a1a" stroke-width="0.9"/>
<rect x="46.9" y="192.0" width="2.6" height="2.0" fill="#d41a1a"/>
<line x1="52.3" x2="52.3" y1="190.0" y2="208.7" stroke="#101010" stroke-width="0.9"/>
<rect x="51.0" y="190.7" width="2.6" height="14.0" fill="#101010"/>
<line x1="56.3" x2="56.3" y1="202.7" y2="214.7" stroke="#101010" stroke-width="0.9"/>
<rect x="55.0" y="203.3" width="2.6" height="7.3" fill="#101010"/>
<line x1="60.4" x2="60.4" y1="206.7" y2="220.7" stroke="#101010" stroke-width="0.9"/>
<rect x="59.1" y="208.0" width="2.6" height="12.0" fill="#101010"/>
<line x1="64.5" x2="64.5" y1="215.3" y2="221.3" stroke="#101010" stroke-width="0.9"/>
<rect x="63.2" y="217.3" width="2.6" height="2.7" fill="#101010"/>
<line x1="68.5" x2="68.5" y1="216.0" y2="222.0" stroke="#d41a1a" stroke-width="0.9"/>
<rect x="67.2" y="216.7" width="2.6" height="4.0" fill="#d41a1a"/>
<line x1="72.6" x2="72.6" y1="213.3" y2="224.7" stroke="#101010" stroke-width="0.9"/>
<rect x="71.3" y="216.0" width="2.6" height="6.7" fill="#101010"/>
<line x1="76.6" x2="76.6" y1="220.0" y2="228.7" stroke="#101010" stroke-width="0.9"/>
<rect x="75.3" y="221.3" width="2.6" height="6.0" fill="#101010"/>
<line x1="80.7" x2="80.7" y1="224.0" y2="229.3" stroke="#d41a1a" stroke-width="0.9"/>
<rect x="79.4" y="225.3" width="2.6" height="2.7" fill="#d41a1a"/>
<line x1="84.7" x2="84.7" y1="224.7" y2="231.3" stroke="#101010" stroke-width="0.9"/>
<rect x="83.4" y="226.0" width="2.6" height="4.0" fill="#101010"/>
<line x1="88.8" x2="88.8" y1="224.4" y2="231.9" stroke="#d41a1a" stroke-width="0.9"/>
<rect x="87.5" y="227.0" width="2.6" height="2.5" fill="#d41a1a"/>
<line x1="92.9" x2="92.9" y1="224.4" y2="233.7" stroke="#101010" stroke-width="0.9"/>
<rect x="91.6" y="227.0" width="2.6" height="4.3" fill="#101010"/>
<line x1="96.9" x2="96.9" y1="221.0" y2="233.7" stroke="#d41a1a" stroke-width="0.9"/>
<rect x="95.6" y="223.5" width="2.6" height="7.7" fill="#d41a1a"/>
<line x1="101.0" x2="101.0" y1="221.0" y2="230.6" stroke="#101010" stroke-width="0.9"/>
<rect x="99.7" y="223.5" width="2.6" height="4.5" fill="#101010"/>
<line x1="105.0" x2="105.0" y1="223.8" y2="230.6" stroke="#d41a1a" stroke-width="0.9"/>
<rect x="103.7" y="226.3" width="2.6" height="1.7" fill="#d41a1a"/>
<line x1="109.1" x2="109.1" y1="223.8" y2="235.1" stroke="#101010" stroke-width="0.9"/>
<rect x="107.8" y="226.3" width="2.6" height="6.2" fill="#101010"/>
<line x1="113.1" x2="113.1" y1="230.0" y2="238.8" stroke="#101010" stroke-width="0.9"/>
<rect x="111.8" y="232.5" width="2.6" height="3.8" fill="#101010"/>
<line x1="117.2" x2="117.2" y1="233.8" y2="239.8" stroke="#101010" stroke-width="0.9"/>
<rect x="115.9" y="236.3" width="2.6" height="1.0" fill="#101010"/>
<line x1="121.3" x2="121.3" y1="232.3" y2="239.8" stroke="#d41a1a" stroke-width="0.9"/>
<rect x="120.0" y="234.9" width="2.6" height="2.4" fill="#d41a1a"/>
<line x1="125.3" x2="125.3" y1="232.3" y2="245.5" stroke="#101010" stroke-width="0.9"/>
<rect x="124.0" y="234.9" width="2.6" height="8.1" fill="#101010"/>
<line x1="129.4" x2="129.4" y1="240.4" y2="246.7" stroke="#101010" stroke-width="0.9"/>
<rect x="128.1" y="243.0" width="2.6" height="1.3" fill="#101010"/>
<line x1="133.4" x2="133.4" y1="241.7" y2="249.2" stroke="#101010" stroke-width="0.9"/>
<rect x="132.1" y="244.2" width="2.6" height="2.4" fill="#101010"/>
<line x1="137.5" x2="137.5" y1="239.1" y2="249.2" stroke="#d41a1a" stroke-width="0.9"/>
<rect x="136.2" y="241.6" width="2.6" height="5.0" fill="#d41a1a"/>
<line x1="141.6" x2="141.6" y1="239.1" y2="245.8" stroke="#101010" stroke-width="0.9"/>
<rect x="140.3" y="241.6" width="2.6" height="1.7" fill="#101010"/>
<line x1="145.6" x2="145.6" y1="240.8" y2="247.9" stroke="#101010" stroke-width="0.9"/>
<rect x="144.3" y="243.3" width="2.6" height="2.1" fill="#101010"/>
<line x1="149.7" x2="149.7" y1="242.8" y2="249.4" stroke="#101010" stroke-width="0.9"/>
<rect x="148.4" y="245.4" width="2.6" height="1.5" fill="#101010"/>
<line x1="153.7" x2="153.7" y1="241.6" y2="249.4" stroke="#d41a1a" stroke-width="0.9"/>
<rect x="152.4" y="244.1" width="2.6" height="2.8" fill="#d41a1a"/>
<line x1="157.8" x2="157.8" y1="239.8" y2="246.6" stroke="#d41a1a" stroke-width="0.9"/>
<rect x="156.5" y="242.4" width="2.6" height="1.7" fill="#d41a1a"/>
<line x1="161.8" x2="161.8" y1="230.4" y2="244.9" stroke="#d41a1a" stroke-width="0.9"/>
<rect x="160.5" y="232.9" width="2.6" height="9.4" fill="#d41a1a"/>
<line x1="165.9" x2="165.9" y1="230.4" y2="246.5" stroke="#101010" stroke-width="0.9"/>
<rect x="164.6" y="232.9" width="2.6" height="11.1" fill="#101010"/>
<line x1="170.0" x2="170.0" y1="240.6" y2="246.5" stroke="#d41a1a" stroke-width="0.9"/>
<rect x="168.7" y="243.1" width="2.6" height="1.0" fill="#d41a1a"/>
<line x1="174.0" x2="174.0" y1="238.6" y2="245.6" stroke="#d41a1a" stroke-width="0.9"/>
<rect x="172.7" y="241.2" width="2.6" height="1.9" fill="#d41a1a"/>
<line x1="178.1" x2="178.1" y1="235.5" y2="243.7" stroke="#d41a1a" stroke-width="0.9"/>
<rect x="176.8" y="238.0" width="2.6" height="3.2" fill="#d41a1a"/>
<line x1="182.1" x2="182.1" y1="235.5" y2="244.8" stroke="#101010" stroke-width="0.9"/>
<rect x="180.8" y="238.0" width="2.6" height="4.3" fill="#101010"/>
<line x1="186.2" x2="186.2" y1="239.8" y2="245.0" stroke="#101010" stroke-width="0.9"/>
<rect x="184.9" y="242.3" width="2.6" height="1.0" fill="#101010"/>
<line x1="190.3" x2="190.3" y1="237.1" y2="258.9" stroke="#101010" stroke-width="0.9"/>
<rect x="189.0" y="242.5" width="2.6" height="9.7" fill="#101010"/>
<line x1="194.3" x2="194.3" y1="249.7" y2="255.3" stroke="#101010" stroke-width="0.9"/>
<rect x="193.0" y="252.2" width="2.6" height="1.0" fill="#101010"/>
<line x1="198.4" x2="198.4" y1="250.3" y2="257.8" stroke="#101010" stroke-width="0.9"/>
<rect x="197.1" y="252.8" width="2.6" height="2.5" fill="#101010"/>
<line x1="202.4" x2="202.4" y1="252.7" y2="260.6" stroke="#101010" stroke-width="0.9"/>
<rect x="201.1" y="255.2" width="2.6" height="2.8" fill="#101010"/>
<line x1="206.5" x2="206.5" y1="252.0" y2="260.8" stroke="#101010" stroke-width="0.9"/>
<rect x="205.2" y="255.9" width="2.6" height="1.9" fill="#101010"/>
<line x1="210.5" x2="210.5" y1="255.3" y2="265.5" stroke="#101010" stroke-width="0.9"/>
<rect x="209.2" y="257.8" width="2.6" height="5.2" fill="#101010"/>
<line x1="214.6" x2="214.6" y1="261.4" y2="266.3" stroke="#d41a1a" stroke-width="0.9"/>
<rect x="213.3" y="264.2" width="2.6" height="1.0" fill="#d41a1a"/>
<line x1="218.7" x2="218.7" y1="261.6" y2="269.6" stroke="#101010" stroke-width="0.9"/>
<rect x="217.4" y="264.2" width="2.6" height="2.9" fill="#101010"/>
<line x1="222.7" x2="222.7" y1="264.0" y2="269.6" stroke="#d41a1a" stroke-width="0.9"/>
<rect x="221.4" y="266.5" width="2.6" height="1.0" fill="#d41a1a"/>
<line x1="226.8" x2="226.8" y1="264.0" y2="278.2" stroke="#101010" stroke-width="0.9"/>
<rect x="225.5" y="266.5" width="2.6" height="9.2" fill="#101010"/>
<line x1="230.8" x2="230.8" y1="273.2" y2="285.9" stroke="#101010" stroke-width="0.9"/>
<rect x="229.5" y="275.7" width="2.6" height="7.7" fill="#101010"/>
<line x1="234.9" x2="234.9" y1="270.8" y2="285.9" stroke="#d41a1a" stroke-width="0.9"/>
<rect x="233.6" y="273.3" width="2.6" height="10.1" fill="#d41a1a"/>
<line x1="238.9" x2="238.9" y1="265.1" y2="275.6" stroke="#d41a1a" stroke-width="0.9"/>
<rect x="237.6" y="272.1" width="2.6" height="1.5" fill="#d41a1a"/>
<line x1="243.0" x2="243.0" y1="258.9" y2="273.3" stroke="#d41a1a" stroke-width="0.9"/>
<rect x="241.7" y="260.5" width="2.6" height="11.2" fill="#d41a1a"/>
<line x1="247.1" x2="247.1" y1="251.0" y2="266.1" stroke="#d41a1a" stroke-width="0.9"/>
<rect x="245.8" y="251.8" width="2.6" height="12.8" fill="#d41a1a"/>
<line x1="251.1" x2="251.1" y1="251.8" y2="261.3" stroke="#101010" stroke-width="0.9"/>
<rect x="249.8" y="252.6" width="2.6" height="5.6" fill="#101010"/>
<line x1="255.2" x2="255.2" y1="251.8" y2="260.5" stroke="#101010" stroke-width="0.9"/>
<rect x="253.9" y="252.6" width="2.6" height="6.4" fill="#101010"/>
<line x1="259.2" x2="259.2" y1="254.1" y2="262.9" stroke="#d41a1a" stroke-width="0.9"/>
<rect x="257.9" y="254.9" width="2.6" height="4.0" fill="#d41a1a"/>
<line x1="263.3" x2="263.3" y1="254.9" y2="261.3" stroke="#101010" stroke-width="0.9"/>
<rect x="262.0" y="255.7" width="2.6" height="3.2" fill="#101010"/>
<line x1="267.4" x2="267.4" y1="255.7" y2="277.3" stroke="#101010" stroke-width="0.9"/>
<rect x="266.1" y="256.5" width="2.6" height="18.3" fill="#101010"/>
<line x1="271.4" x2="271.4" y1="264.5" y2="279.7" stroke="#d41a1a" stroke-width="0.9"/>
<rect x="270.1" y="266.9" width="2.6" height="9.6" fill="#d41a1a"/>
<line x1="275.5" x2="275.5" y1="264.5" y2="274.9" stroke="#101010" stroke-width="0.9"/>
<rect x="274.2" y="266.1" width="2.6" height="5.6" fill="#101010"/>
<line x1="279.5" x2="279.5" y1="268.5" y2="281.3" stroke="#101010" stroke-width="0.9"/>
<rect x="278.2" y="270.1" width="2.6" height="9.6" fill="#101010"/>
<line x1="283.6" x2="283.6" y1="274.9" y2="282.9" stroke="#d41a1a" stroke-width="0.9"/>
<rect x="282.3" y="277.3" width="2.6" height="1.6" fill="#d41a1a"/>
<line x1="287.6" x2="287.6" y1="280.5" y2="290.0" stroke="#101010" stroke-width="0.9"/>
<rect x="286.3" y="281.3" width="2.6" height="8.0" fill="#101010"/>
<line x1="291.7" x2="291.7" y1="281.3" y2="289.2" stroke="#d41a1a" stroke-width="0.9"/>
<rect x="290.4" y="285.3" width="2.6" height="2.4" fill="#d41a1a"/>
<line x1="295.8" x2="295.8" y1="283.7" y2="291.6" stroke="#101010" stroke-width="0.9"/>
<rect x="294.5" y="285.3" width="2.6" height="2.4" fill="#101010"/>
<line x1="299.8" x2="299.8" y1="285.3" y2="294.8" stroke="#101010" stroke-width="0.9"/>
<rect x="298.5" y="286.1" width="2.6" height="4.8" fill="#101010"/>
<line x1="303.9" x2="303.9" y1="292.4" y2="307.6" stroke="#101010" stroke-width="0.9"/>
<rect x="302.6" y="293.2" width="2.6" height="12.8" fill="#101010"/>
<line x1="307.9" x2="307.9" y1="298.0" y2="303.6" stroke="#d41a1a" stroke-width="0.9"/>
<rect x="306.6" y="298.8" width="2.6" height="3.2" fill="#d41a1a"/>
<line x1="312.0" x2="312.0" y1="294.0" y2="305.2" stroke="#101010" stroke-width="0.9"/>
<rect x="310.7" y="298.0" width="2.6" height="6.4" fill="#101010"/>
<line x1="316.0" x2="316.0" y1="302.8" y2="313.2" stroke="#101010" stroke-width="0.9"/>
<rect x="314.7" y="303.6" width="2.6" height="8.0" fill="#101010"/>
<line x1="320.1" x2="320.1" y1="310.8" y2="322.0" stroke="#101010" stroke-width="0.9"/>
<rect x="318.8" y="311.6" width="2.6" height="8.0" fill="#101010"/>
<line x1="324.2" x2="324.2" y1="311.6" y2="319.6" stroke="#101010" stroke-width="0.9"/>
<rect x="322.9" y="313.2" width="2.6" height="3.2" fill="#101010"/>
<line x1="328.2" x2="328.2" y1="308.4" y2="315.6" stroke="#d41a1a" stroke-width="0.9"/>
<rect x="326.9" y="310.0" width="2.6" height="4.8" fill="#d41a1a"/>
<line x1="332.3" x2="332.3" y1="308.3" y2="318.3" stroke="#d41a1a" stroke-width="0.9"/>
<rect x="331.0" y="309.2" width="2.6" height="4.2" fill="#d41a1a"/>
<line x1="336.3" x2="336.3" y1="314.9" y2="326.9" stroke="#101010" stroke-width="0.9"/>
<rect x="335.0" y="317.4" width="2.6" height="7.0" fill="#101010"/>
<line x1="340.4" x2="340.4" y1="320.0" y2="326.9" stroke="#d41a1a" stroke-width="0.9"/>
<rect x="339.1" y="322.5" width="2.6" height="1.8" fill="#d41a1a"/>
<line x1="344.5" x2="344.5" y1="320.0" y2="331.2" stroke="#101010" stroke-width="0.9"/>
<rect x="343.2" y="322.5" width="2.6" height="6.2" fill="#101010"/>
<line x1="348.5" x2="348.5" y1="326.2" y2="332.8" stroke="#101010" stroke-width="0.9"/>
<rect x="347.2" y="328.7" width="2.6" height="1.6" fill="#101010"/>
<line x1="352.6" x2="352.6" y1="329.2" y2="334.2" stroke="#d41a1a" stroke-width="0.9"/>
<rect x="351.3" y="331.0" width="2.6" height="1.7" fill="#d41a1a"/>
<line x1="356.6" x2="356.6" y1="320.6" y2="333.6" stroke="#d41a1a" stroke-width="0.9"/>
<rect x="355.3" y="323.1" width="2.6" height="8.0" fill="#d41a1a"/>
<line x1="360.7" x2="360.7" y1="316.7" y2="327.7" stroke="#101010" stroke-width="0.9"/>
<rect x="359.4" y="322.5" width="2.6" height="4.2" fill="#101010"/>
<line x1="364.7" x2="364.7" y1="320.1" y2="328.2" stroke="#d41a1a" stroke-width="0.9"/>
<rect x="363.4" y="322.6" width="2.6" height="3.1" fill="#d41a1a"/>
<line x1="368.8" x2="368.8" y1="320.1" y2="331.7" stroke="#101010" stroke-width="0.9"/>
<rect x="367.5" y="322.6" width="2.6" height="6.6" fill="#101010"/>
<line x1="372.9" x2="372.9" y1="315.5" y2="331.7" stroke="#d41a1a" stroke-width="0.9"/>
<rect x="371.6" y="318.0" width="2.6" height="11.1" fill="#d41a1a"/>
<line x1="376.9" x2="376.9" y1="315.5" y2="329.3" stroke="#101010" stroke-width="0.9"/>
<rect x="375.6" y="318.0" width="2.6" height="8.8" fill="#101010"/>
<line x1="381.0" x2="381.0" y1="324.3" y2="336.9" stroke="#101010" stroke-width="0.9"/>
<rect x="379.7" y="326.8" width="2.6" height="7.6" fill="#101010"/>
<line x1="385.0" x2="385.0" y1="331.4" y2="336.9" stroke="#d41a1a" stroke-width="0.9"/>
<rect x="383.7" y="334.0" width="2.6" height="1.0" fill="#d41a1a"/>
<line x1="389.1" x2="389.1" y1="329.1" y2="336.5" stroke="#d41a1a" stroke-width="0.9"/>
<rect x="387.8" y="331.7" width="2.6" height="2.3" fill="#d41a1a"/>
<line x1="393.2" x2="393.2" y1="329.1" y2="339.3" stroke="#101010" stroke-width="0.9"/>
<rect x="391.9" y="331.7" width="2.6" height="5.2" fill="#101010"/>
<line x1="397.2" x2="397.2" y1="334.3" y2="344.7" stroke="#101010" stroke-width="0.9"/>
<rect x="395.9" y="336.8" width="2.6" height="5.3" fill="#101010"/>
<line x1="401.3" x2="401.3" y1="336.1" y2="344.7" stroke="#d41a1a" stroke-width="0.9"/>
<rect x="400.0" y="338.7" width="2.6" height="3.5" fill="#d41a1a"/>
<line x1="405.3" x2="405.3" y1="336.1" y2="343.2" stroke="#101010" stroke-width="0.9"/>
<rect x="404.0" y="338.7" width="2.6" height="2.0" fill="#101010"/>
<line x1="409.4" x2="409.4" y1="338.2" y2="346.7" stroke="#101010" stroke-width="0.9"/>
<rect x="408.1" y="340.7" width="2.6" height="3.5" fill="#101010"/>
<line x1="413.4" x2="413.4" y1="341.7" y2="347.6" stroke="#101010" stroke-width="0.9"/>
<rect x="412.1" y="344.2" width="2.6" height="1.0" fill="#101010"/>
<line x1="417.5" x2="417.5" y1="342.6" y2="348.9" stroke="#101010" stroke-width="0.9"/>
<rect x="416.2" y="345.1" width="2.6" height="1.3" fill="#101010"/>
<line x1="421.6" x2="421.6" y1="346.1" y2="355.0" stroke="#101010" stroke-width="0.9"/>
<rect x="420.3" y="350.5" width="2.6" height="3.0" fill="#101010"/>
<polyline points="299.8,234.1 320.1,236.1 368.8,245.8 421.6,258.2" fill="none" stroke="#9a9a9a" stroke-width="0.9" stroke-linejoin="round"/>
<polyline points="56.3,217.1 68.5,215.1 84.7,214.2 105.0,214.1 123.7,214.6 145.6,216.4 165.1,218.9 190.3,222.1 219.9,227.7 238.9,233.2 275.5,242.6 320.1,258.1 368.8,274.9 421.6,296.7" fill="none" stroke="#ff9a1e" stroke-width="0.9" stroke-linejoin="round"/>
<polyline points="11.7,210.8 15.8,209.4 19.8,207.6 23.9,206.2 27.9,205.9 32.0,205.8 36.0,205.4 40.1,205.0 44.2,204.3 48.2,203.4 52.3,203.0 56.3,203.0 60.4,203.6 64.5,203.9 68.5,204.2 72.6,204.9 76.6,206.0 80.7,206.7 84.7,208.1 88.8,209.4 92.9,210.9 96.9,212.1 101.0,213.7 105.0,215.4 109.1,217.1 113.1,218.5 117.2,220.0 121.3,221.8 125.3,224.3 129.4,226.9 133.4,229.0 137.5,230.6 141.6,231.8 145.6,233.1 149.7,234.6 153.7,235.7 157.8,236.5 161.8,236.8 165.9,237.6 170.0,238.4 174.0,238.9 178.1,239.6 182.1,240.3 186.2,241.1 190.3,242.1 194.3,242.9 198.4,243.8 202.4,245.0 206.5,245.7 210.5,246.7 214.6,247.5 218.7,248.8 222.7,250.0 226.8,251.5 230.8,253.3 234.9,254.8 238.9,256.3 243.0,257.7 247.1,258.1 251.1,258.8 255.2,259.7 259.2,260.6 263.3,261.3 267.4,262.9 271.4,263.6 275.5,264.6 279.5,265.7 283.6,266.8 287.6,268.3 291.7,269.4 295.8,270.6 299.8,271.8 303.9,273.7 307.9,275.0 312.0,276.0 316.0,277.9 320.1,280.3 324.2,283.0 328.2,286.0 332.3,289.0 336.3,292.2 340.4,295.6 344.5,299.2 348.5,302.0 352.6,305.2 356.6,307.8 360.7,310.1 364.7,312.3 368.8,314.3 372.9,316.0 376.9,318.0 381.0,320.1 385.0,321.5 389.1,323.1 393.2,324.7 397.2,326.3 401.3,327.2 405.3,328.5 409.4,330.1 413.4,331.5 417.5,332.6 421.6,334.1" fill="none" stroke="#1f9a2a" stroke-width="0.9" stroke-linejoin="round"/>
<polyline points="11.7,207.1 15.8,205.9 19.8,204.8 23.9,202.5 27.9,201.4 32.0,201.5 36.0,201.7 40.1,200.5 44.2,199.6 48.2,198.7 52.3,199.0 56.3,200.0 60.4,202.4 64.5,205.2 68.5,206.9 72.6,208.3 76.6,210.2 80.7,212.9 84.7,216.6 88.8,220.0 92.9,222.8 96.9,224.1 101.0,225.0 105.0,225.7 109.1,227.3 113.1,228.7 117.2,229.7 121.3,230.6 125.3,232.0 129.4,233.7 133.4,235.3 137.5,237.1 141.6,238.6 145.6,240.5 149.7,241.9 153.7,242.7 157.8,243.2 161.8,243.0 165.9,243.1 170.0,243.0 174.0,242.5 178.1,242.1 182.1,242.0 186.2,241.7 190.3,242.3 194.3,243.1 198.4,244.4 202.4,246.9 206.5,248.3 210.5,250.3 214.6,252.6 218.7,255.5 222.7,257.9 226.8,261.3 230.8,264.4 234.9,266.4 238.9,268.1 243.0,268.4 247.1,267.9 251.1,267.3 255.2,266.8 259.2,265.6 263.3,264.6 267.4,264.5 271.4,262.9 275.5,262.7 279.5,263.3 283.6,265.1 287.6,268.8 291.7,271.5 295.8,274.4 299.8,278.0 303.9,282.9 307.9,285.4 312.0,289.1 316.0,293.1 320.1,297.2 324.2,300.9 328.2,303.2 332.3,306.4 336.3,310.1 340.4,313.3 344.5,315.6 348.5,318.6 352.6,321.2 356.6,322.4 360.7,323.1 364.7,323.8 368.8,325.5 372.9,325.6 376.9,325.8 381.0,327.0 385.0,327.5 389.1,327.6 393.2,328.2 397.2,330.1 401.3,331.4 405.3,333.2 409.4,334.7 413.4,337.4 417.5,339.4 421.6,341.3" fill="none" stroke="#ff22e6" stroke-width="0.9" stroke-linejoin="round"/>
<polyline points="11.7,204.2 15.8,202.9 19.8,199.8 23.9,197.9 27.9,197.5 32.0,198.9 36.0,200.5 40.1,201.2 44.2,201.2 48.2,200.0 52.3,199.0 56.3,199.5 60.4,203.7 64.5,209.1 68.5,213.9 72.6,217.5 76.6,220.9 80.7,222.2 84.7,224.1 88.8,226.2 92.9,228.1 96.9,227.4 101.0,227.8 105.0,227.2 109.1,228.3 113.1,229.3 117.2,232.1 121.3,233.5 125.3,236.8 129.4,239.1 133.4,241.2 137.5,242.1 141.6,243.7 145.6,244.2 149.7,244.8 153.7,244.2 157.8,244.4 161.8,242.3 165.9,242.0 170.0,241.3 174.0,240.7 178.1,239.8 182.1,241.7 186.2,241.4 190.3,243.2 194.3,245.6 198.4,249.0 202.4,252.2 206.5,255.2 210.5,257.4 214.6,259.7 218.7,262.0 222.7,263.7 226.8,267.3 230.8,271.4 234.9,273.2 238.9,274.2 243.0,273.1 247.1,268.5 251.1,263.3 255.2,260.4 259.2,257.0 263.3,256.2 267.4,260.6 271.4,262.6 275.5,265.0 279.5,269.7 283.6,274.1 287.6,277.0 291.7,280.5 295.8,283.7 299.8,286.2 303.9,291.6 307.9,293.9 312.0,297.7 316.0,302.6 320.1,308.2 324.2,310.1 328.2,312.5 332.3,315.1 336.3,317.7 340.4,318.4 344.5,321.0 348.5,324.7 352.6,327.4 356.6,327.2 360.7,327.8 364.7,326.6 368.8,326.3 372.9,323.7 376.9,324.4 381.0,326.2 385.0,328.5 389.1,329.0 393.2,332.7 397.2,335.8 401.3,336.6 405.3,338.0 409.4,340.5 413.4,342.2 417.5,343.0 421.6,346.0" fill="none" stroke="#1a1ae0" stroke-width="0.9" stroke-linejoin="round"/>
<polyline points="11.7,491.2 15.8,487.8 19.8,485.0 23.9,483.3 27.9,489.1 32.0,502.4 36.0,511.2 40.1,508.3 44.2,499.6 48.2,493.6 52.3,502.3 56.3,513.8 60.4,522.2 64.5,527.8 68.5,528.8 72.6,532.3 76.6,534.9 80.7,535.6 84.7,537.2 88.8,535.8 92.9,536.4 96.9,526.7 101.0,525.8 105.0,523.1 109.1,526.5 113.1,529.1 117.2,531.1 121.3,529.2 125.3,531.9 129.4,533.8 133.4,535.3 137.5,531.2 141.6,530.1 145.6,530.1 149.7,531.4 153.7,528.3 157.8,523.8 161.8,509.7 165.9,514.5 170.0,516.5 174.0,515.4 178.1,510.7 182.1,513.0 186.2,514.8 190.3,522.2 194.3,527.3 198.4,530.9 202.4,533.0 206.5,534.3 210.5,535.7 214.6,536.8 218.7,537.4 222.7,537.3 226.8,537.6 230.8,538.3 234.9,531.2 238.9,524.7 243.0,511.5 247.1,500.1 251.1,495.6 255.2,493.6 259.2,489.6 263.3,488.3 267.4,499.4 271.4,505.8 275.5,513.2 279.5,521.7 283.6,527.4 287.6,531.6 291.7,532.1 295.8,533.5 299.8,535.7 303.9,537.3 307.9,535.1 312.0,535.8 316.0,537.2 320.1,538.3 324.2,536.8 328.2,533.3 332.3,534.3 336.3,536.2 340.4,535.4 344.5,536.7 348.5,537.4 352.6,537.4 356.6,529.4 360.7,526.6 364.7,521.6 368.8,523.5 372.9,509.7 376.9,512.2 381.0,520.2 385.0,525.0 389.1,525.6 393.2,529.4 397.2,532.4 401.3,531.5 405.3,532.6 409.4,534.7 413.4,535.4 417.5,535.4 421.6,537.1" fill="none" stroke="#1f8a2a" stroke-width="0.9" stroke-linejoin="round"/>
<polyline points="11.7,495.4 15.8,492.8 19.8,490.2 23.9,487.9 27.9,488.3 32.0,493.0 36.0,499.1 40.1,502.1 44.2,501.3 48.2,498.7 52.3,499.9 56.3,504.5 60.4,510.4 64.5,516.2 68.5,520.4 72.6,524.4 76.6,527.9 80.7,530.5 84.7,532.7 88.8,533.7 92.9,534.6 96.9,532.0 101.0,529.9 105.0,527.6 109.1,527.2 113.1,527.9 117.2,528.9 121.3,529.0 125.3,530.0 129.4,531.3 133.4,532.6 137.5,532.1 141.6,531.4 145.6,531.0 149.7,531.1 153.7,530.2 157.8,528.1 161.8,521.9 165.9,519.5 170.0,518.5 174.0,517.5 178.1,515.2 182.1,514.5 186.2,514.6 190.3,517.1 194.3,520.5 198.4,524.0 202.4,527.0 206.5,529.4 210.5,531.5 214.6,533.3 218.7,534.6 222.7,535.5 226.8,536.2 230.8,536.9 234.9,535.0 238.9,531.6 243.0,524.9 247.1,516.6 251.1,509.6 255.2,504.3 259.2,499.4 263.3,495.7 267.4,496.9 271.4,499.9 275.5,504.3 279.5,510.1 283.6,515.9 287.6,521.1 291.7,524.8 295.8,527.7 299.8,530.4 303.9,532.7 307.9,533.5 312.0,534.3 316.0,535.2 320.1,536.3 324.2,536.4 328.2,535.4 332.3,535.0 336.3,535.4 340.4,535.4 344.5,535.8 348.5,536.4 352.6,536.7 356.6,534.2 360.7,531.7 364.7,528.3 368.8,526.7 372.9,521.1 376.9,518.1 381.0,518.8 385.0,520.9 389.1,522.5 393.2,524.8 397.2,527.3 401.3,528.7 405.3,530.0 409.4,531.6 413.4,532.8 417.5,533.7 421.6,534.8" fill="none" stroke="#e21a1a" stroke-width="0.9" stroke-linejoin="round"/>
<text x="447.4" y="371.4" class="ax" textLength="9.3" lengthAdjust="spacingAndGlyphs">40</text>
<text x="447.4" y="354.6" class="ax" textLength="9.3" lengthAdjust="spacingAndGlyphs">50</text>
<text x="447.4" y="337.8" class="ax" textLength="9.3" lengthAdjust="spacingAndGlyphs">60</text>
<text x="447.4" y="321.0" class="ax" textLength="9.3" lengthAdjust="spacingAndGlyphs">70</text>
<text x="447.4" y="304.2" class="ax" textLength="9.3" lengthAdjust="spacingAndGlyphs">80</text>
<text x="447.4" y="287.4" class="ax" textLength="9.3" lengthAdjust="spacingAndGlyphs">90</text>
<text x="447.4" y="270.6" class="ax" textLength="14.1" lengthAdjust="spacingAndGlyphs">100</text>
<text x="447.4" y="253.8" class="ax" textLength="14.1" lengthAdjust="spacingAndGlyphs">110</text>
<text x="447.4" y="237.0" class="ax" textLength="14.1" lengthAdjust="spacingAndGlyphs">120</text>
<text x="447.4" y="220.2" class="ax" textLength="14.1" lengthAdjust="spacingAndGlyphs">130</text>
<text x="447.4" y="203.4" class="ax" textLength="14.1" lengthAdjust="spacingAndGlyphs">140</text>
<text x="447.4" y="459.9" class="ax" textLength="4.4" lengthAdjust="spacingAndGlyphs">0</text>
<text x="447.4" y="441.6" class="ax" textLength="28.4" lengthAdjust="spacingAndGlyphs">100000</text>
<text x="447.4" y="423.3" class="ax" textLength="28.4" lengthAdjust="spacingAndGlyphs">200000</text>
<text x="447.4" y="405.0" class="ax" textLength="28.4" lengthAdjust="spacingAndGlyphs">300000</text>
<text x="447.4" y="547.2" class="ax" textLength="4.4" lengthAdjust="spacingAndGlyphs">0</text>
<text x="447.4" y="529.0" class="ax" textLength="9.3" lengthAdjust="spacingAndGlyphs">25</text>
<text x="447.4" y="510.9" class="ax" textLength="9.3" lengthAdjust="spacingAndGlyphs">50</text>
<text x="447.4" y="492.7" class="ax" textLength="9.3" lengthAdjust="spacingAndGlyphs">75</text>
<text x="9.3" y="171.6" class="tt" textLength="48.1" lengthAdjust="spacingAndGlyphs">2008/11/20</text>
<text x="63.2" y="171.6" class="tt" textLength="9.3" lengthAdjust="spacingAndGlyphs">開</text>
<text x="78.3" y="171.6" class="tt" textLength="19.0" lengthAdjust="spacingAndGlyphs">51.2</text>
<text x="101.9" y="171.6" class="tt" textLength="9.3" lengthAdjust="spacingAndGlyphs">高</text>
<text x="117.0" y="171.6" class="tt" textLength="19.0" lengthAdjust="spacingAndGlyphs">53.8</text>
<text x="140.3" y="171.6" class="tt" textLength="9.3" lengthAdjust="spacingAndGlyphs">低</text>
<text x="155.3" y="171.6" class="tt" textLength="23.9" lengthAdjust="spacingAndGlyphs">48.52</text>
<text x="185.9" y="171.6" class="tt" textLength="9.3" lengthAdjust="spacingAndGlyphs">收</text>
<text x="200.0" y="171.6" class="tt" textLength="32.9" lengthAdjust="spacingAndGlyphs">49.42元</text>
<text x="239.2" y="171.6" class="tt" textLength="58.1" lengthAdjust="spacingAndGlyphs">-4.20(-7.83%)</text>
<text x="14.7" y="183.2" class="tt" textLength="42.6" lengthAdjust="spacingAndGlyphs">MA5 53.88</text>
<text x="68.8" y="183.2" class="tt" textLength="47.4" lengthAdjust="spacingAndGlyphs">MA10 56.65</text>
<text x="128.0" y="183.2" class="tt" textLength="47.4" lengthAdjust="spacingAndGlyphs">MA20 60.92</text>
<text x="187.5" y="183.2" class="tt" textLength="47.4" lengthAdjust="spacingAndGlyphs">MA60 83.19</text>
<text x="246.7" y="183.2" class="tt" textLength="57.0" lengthAdjust="spacingAndGlyphs">MA120 106.11</text>
<text x="315.0" y="183.2" class="tt" textLength="42.6" lengthAdjust="spacingAndGlyphs">MA240 N/A</text>
<text x="400.0" y="170.6" class="tt" textLength="62.0" lengthAdjust="spacingAndGlyphs">©cnYES鉅亨網</text>
<text x="14.5" y="383.4" class="tt" textLength="110.0" lengthAdjust="spacingAndGlyphs">成交量(Volume) 219553張</text>
<text x="137.5" y="383.4" class="tt" textLength="66.8" lengthAdjust="spacingAndGlyphs">均量5 263064張</text>
<text x="215.9" y="383.4" class="tt" textLength="71.6" lengthAdjust="spacingAndGlyphs">均量10 264976張</text>
<text x="299.3" y="383.4" class="tt" textLength="71.6" lengthAdjust="spacingAndGlyphs">均量20 265313張</text>
<text x="14.5" y="470.8" class="tt" textLength="38.0" lengthAdjust="spacingAndGlyphs">K9 6.99%</text>
<text x="64.5" y="470.8" class="tt" textLength="42.8" lengthAdjust="spacingAndGlyphs">D9 10.08%</text>
</svg>
<div id="foot">如果無法正常瀏覽報</div>
</body>
</html>
